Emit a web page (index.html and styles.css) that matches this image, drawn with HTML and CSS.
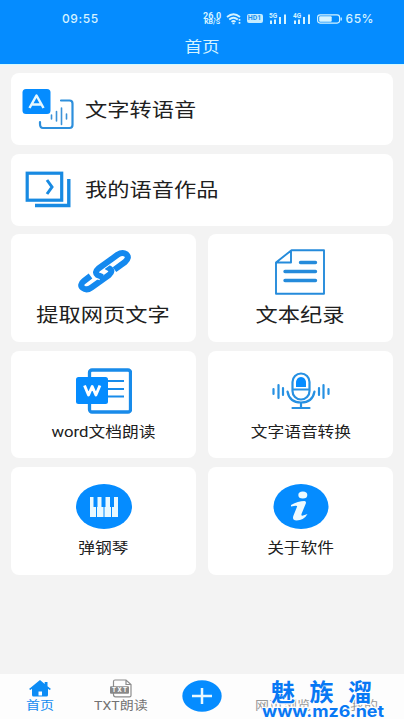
FILE: index.html
```
<!DOCTYPE html>
<html lang="zh-CN">
<head>
<meta charset="utf-8">
<meta name="viewport" content="width=device-width, initial-scale=1">
<title>首页</title>
<link rel="stylesheet" href="styles.css">
</head>
<body>
<header class="header">
  <div class="status">
    <span class="clock">09:55</span>
    <div class="indicators">
      <span class="speed"><b>26.0</b><b>KB/S</b></span>
      <svg class="wifi" width="17" height="12" viewBox="0 0 17 12" fill="none" stroke="currentColor" stroke-width="1.700"><path d="M1 4Q7.500-1.500 14 4M3.200 6.500Q7.500 3 11.800 6.500M5.500 8.800Q7.500 7.200 9.500 8.800"/><path d="M13.500 6v1.800M13.500 9v1.800M6.500 10.500h2"/></svg>
      <span class="hd">HD1</span>
      <svg class="signal" width="18" height="12" viewBox="0 0 18 12" fill="currentColor"><text x="0" y="5" font-size="6.500" font-weight="700">5G</text><path d="M1 7.500h2V11H1zM5 6.500h2V11H5zM10 4h2v7h-2zM15 1.500h2V11h-2z"/></svg>
      <svg class="signal" width="18" height="12" viewBox="0 0 18 12" fill="currentColor"><text x="0" y="5" font-size="6.500" font-weight="700">4G</text><path d="M1 7.500h2V11H1zM5 6.500h2V11H5zM10 4h2v7h-2zM15 1.500h2V11h-2z"/></svg>
      <svg class="battery" width="26" height="10" viewBox="0 0 26 10"><rect x=".6" y=".9" width="22" height="8.200" rx="2.500" fill="none" stroke="currentColor" stroke-width="1.100"/><rect x="2.200" y="2.200" width="12.500" height="5.600" rx="1" fill="currentColor"/><path d="M24.200 3.500v3" stroke="currentColor" stroke-width="1.300"/></svg>
      <span class="percent">65%</span>
    </div>
  </div>
  <h1 class="title"><span class="wide">首页</span></h1>
</header>

<main class="content">
  <a class="card row-card">
    <svg width="52" height="44" viewBox="0 0 52 44" fill="none"><path d="M39 11.500h8.500a3 3 0 0 1 3 3V36a3 3 0 0 1-3 3H21q-3 0-3-4v-2" stroke="#2d8fdc" stroke-width="2.200" stroke-linecap="round"/><path d="M29.500 26v4M34.500 22.500v9.500M39.500 19v16.500M44.500 25v5" stroke="#3b92d8" stroke-width="1.600" stroke-linecap="round"/><rect x=".5" y="0" width="28" height="25" rx="3.500" fill="#058cff"/><path d="M7.500 19 14.500 6.500 21.500 19M10.300 15.500h8.500" stroke="#e6f8ff" stroke-width="2.500" stroke-linejoin="round"/></svg>
    <span class="wide big">文字转语音</span>
  </a>
  <a class="card row-card">
    <svg width="52" height="44" viewBox="0 0 52 44" fill="none" stroke="#188ae2"><rect x="5.200" y="4.200" width="34.500" height="27" stroke-width="3.200"/><path d="M46.800 10v26.500H13" stroke-width="3.400"/><path d="m25 11 5 7-5 7" stroke-width="3"/></svg>
    <span class="wide big">我的语音作品</span>
  </a>

  <section class="grid">
    <a class="card tile">
      <svg width="56" height="46" viewBox="0 0 56 46" fill="none" stroke="#1489ef" stroke-width="6" stroke-linejoin="round"><path d="M14.500 27 8 32Q3 36 6.800 39 10.500 42 15.500 38.500L33 26Q37.500 22 33.500 19.500L30 17.500"/><path d="M25 27.500 21.500 26Q18 23.500 22.500 19.500L41.500 5.800Q46.500 2.500 50.300 5.200 54 8.500 49 13L39.500 20" stroke="#fff" stroke-width="8"/><path d="M26.500 28 21.500 26Q18 23.500 22.500 19.500L41.500 5.800Q46.500 2.500 50.300 5.200 54 8.500 49 13L38.500 20.700"/></svg>
      <span class="wide big">提取网页文字</span>
    </a>
    <a class="card tile">
      <svg width="56" height="46" viewBox="0 0 56 46" fill="none" stroke="#258bdb"><path d="M18.500 1.200H51V44.800H3V13.500zM18 1.500v12H3.500" stroke-width="1.900" stroke-linejoin="round"/><path d="M27.500 13.500h15M12 22.500h30.500M12 31.500h30.500" stroke-width="3.400" stroke-linecap="round"/></svg>
      <span class="wide big">文本纪录</span>
    </a>
    <a class="card tile lower">
      <svg width="56" height="46" viewBox="0 0 56 46" fill="none"><rect x="13.500" y="2" width="41" height="42" rx="2.500" stroke="#188bea" stroke-width="3.300"/><path d="M32 13h16M32 21h16M32 28.500h16" stroke="#188bea" stroke-width="2.200"/><rect x="0" y="9" width="32" height="27" rx="2.500" fill="#058cff"/><path d="m8.500 17.500 4 9.500 3.700-8.500 3.700 8.500 4-9.500" stroke="#fff" stroke-width="2.900" stroke-linejoin="round"/></svg>
      <span class="wide small">word文档朗读</span>
    </a>
    <a class="card tile lower">
      <svg width="58" height="46" viewBox="0 0 58 46" fill="none" stroke="#2690e2" stroke-width="2.200" stroke-linecap="round"><rect x="20.500" y="5.500" width="17" height="26" rx="8.500"/><path d="M24 19v-3.500Q24 9 29 9t5 6.500V19z" fill="#058cff" stroke="none"/><path d="M21 21.500h16M15.500 23.500Q17.500 34.500 29 34.500T42.500 23.500M29 35v5M20.500 40h17M1.500 21v5M6.500 17v13M11 20v7M47 20v7M51.500 17v13M56.500 21v5"/></svg>
      <span class="wide small">文字语音转换</span>
    </a>
    <a class="card tile round">
      <svg width="56" height="46" viewBox="0 0 56 46"><ellipse cx="28" cy="23.500" rx="28" ry="22.500" fill="#058cff"/><path d="M14 14h28v20H14z" fill="#e9f9ff"/><path d="M17.500 13h4v11h-4zM25.500 13h4v11h-4zM34 13h4v11h-4z" fill="#058cff"/><path d="M20.500 24v10.500M28 24v10.500M35.500 24v10.500" stroke="#058cff" stroke-width="1"/></svg>
      <span class="wide small">弹钢琴</span>
    </a>
    <a class="card tile round">
      <svg width="56" height="46" viewBox="0 0 56 46"><ellipse cx="28" cy="23.500" rx="27.500" ry="22.500" fill="#058cff"/><ellipse cx="29.800" cy="12" rx="4.500" ry="3.500" fill="#edfaff"/><path d="M18 22Q25 18 31.500 18 33.500 18.300 32.800 20.500L28.500 31Q28 33.200 30 32.600L34.500 31Q31 37.300 23.500 37.500 19 37.200 20.300 33L24 23.800Q24.500 22.500 22.500 22.700L18 23.500z" fill="#edfaff"/></svg>
      <span class="wide small">关于软件</span>
    </a>
  </section>
</main>

<nav class="nav">
  <a class="tab active">
    <svg width="24" height="19" viewBox="0 0 24 19"><path d="M12 1 1 10l1.400 1L4 9.800V16q0 1.500 1.500 1.500h13q1.500 0 1.500-1.500V9.800l1.600 1.200L23 10l-3.500-2.800V3h-2.800v2z" fill="#0c8cf5"/><path d="M10.500 12.500h3.500v4h-3.500z" fill="#fff"/></svg>
    <span class="wide label">首页</span>
  </a>
  <a class="tab">
    <svg width="24" height="19" viewBox="0 0 24 19" fill="none"><path d="M4.500 8V2.500Q4.500 1 6 1h11l5 4.500v11q0 1.300-1.500 1.300h-14q-2 0-2-2V14M17 1v4.500h5" stroke="#8c8c8c" stroke-width="1.200"/><rect x="1" y="7.200" width="19" height="7.500" rx="1" fill="#888"/><text x="10.500" y="13.300" text-anchor="middle" font-size="6.500" font-weight="700" textLength="15" fill="#fff">TXT</text></svg>
    <span class="wide label">TXT朗读</span>
  </a>
  <a class="tab add">
    <svg width="40" height="32" viewBox="0 0 40 32"><ellipse cx="20" cy="16" rx="19.700" ry="15.700" fill="#058cff"/><path d="M10 16h20M20 8v16" stroke="#e9f9ff" stroke-width="2.500"/></svg>
  </a>
  <a class="tab muted"><span class="wide label">网页浏览</span></a>
  <a class="tab muted"><span class="wide label">我的</span></a>
  <div class="watermark">
    <svg width="140" height="42" viewBox="0 0 140 42"><g class="mark-text"><text x="9" y="24" font-size="24" textLength="101">魅族溜</text><text x="0" y="39.500" font-size="16" textLength="122" lengthAdjust="spacingAndGlyphs">www.mz6.net</text></g></svg>
  </div>
</nav>
</body>
</html>
```
FILE: styles.css
```
* { box-sizing: border-box; }

body {
  margin: 0;
  width: 404px;
  height: 719px;
  overflow: hidden;
  display: flex;
  flex-direction: column;
  background: #f3f3f3;
  color: #202020;
  font-family: Roboto, "Noto Sans CJK SC", sans-serif;
}

svg { display: block; flex: none; }

.wide {
  display: inline-block;
  white-space: nowrap;
  transform: scaleX(1.17);
}

.header {
  height: 65px;
  flex: none;
  padding-top: 10px;
  background: #058cff;
  border-bottom: 1px solid #d5faff;
  color: #d5f3ff;
}

.status {
  height: 17px;
  display: flex;
  align-items: center;
  justify-content: space-between;
  padding: 0 30px 0 62px;
}

.clock {
  font: 500 12px/17px Inter, sans-serif;
  letter-spacing: 0.6px;
}

.indicators {
  display: flex;
  align-items: center;
}

.speed {
  width: 19px;
  margin-right: 4px;
  display: flex;
  flex-direction: column;
  align-items: center;
  font-size: 9px;
  line-height: 7px;
}

.speed b + b { font-size: 7px; line-height: 5px; }
.wifi { margin-right: 4px; }

.hd {
  width: 16px;
  height: 9px;
  margin-right: 6px;
  border-radius: 2px;
  background: #c5ecff;
  color: #1790f2;
  font-size: 7px;
  font-weight: 700;
  line-height: 9px;
  text-align: center;
}

.signal { margin-right: 6px; }
.battery { margin-right: 3px; }

.percent {
  font: 500 12px/17px Inter, sans-serif;
  letter-spacing: 0.5px;
}

.title {
  margin: 10px 0 0;
  font-size: 15px;
  font-weight: 400;
  line-height: 20px;
  text-align: center;
}

.content {
  flex: 1;
  display: flex;
  flex-direction: column;
  gap: 8.500px;
  padding: 8px 11px 0;
}

.card {
  display: flex;
  align-items: center;
  background: #fff;
  border-radius: 8px;
}

.row-card {
  height: 72px;
  padding: 3px 0 0 11px;
  gap: 11px;
}

.row-card .wide { transform-origin: left center; }

.grid {
  display: grid;
  grid-template-columns: 185px 185px;
  grid-auto-rows: 107.500px;
  gap: 9px 12px;
}

.tile {
  flex-direction: column;
  padding-top: 15px;
}

.lower { padding-top: 17px; }
.round { padding-top: 16px; }

.big { font-size: 19px; line-height: 28px; }
.tile .big { margin-top: 7px; }
.small { font-size: 14.300px; line-height: 22px; margin-top: 8px; }
.lower .small { margin-top: 7px; }

.nav {
  position: relative;
  height: 45px;
  flex: none;
  display: grid;
  grid-template-columns: repeat(5, 1fr);
  background: #fdfdfd;
}

.tab {
  display: flex;
  flex-direction: column;
  align-items: center;
  padding-top: 5px;
  color: #737373;
}

.active { color: #168cf0; }
.label { font-size: 12px; line-height: 17px; }
.add { padding-top: 6px; }
.muted { padding-top: 24px; color: #999; }

.watermark {
  position: absolute;
  left: 262px;
  top: 3px;
}

.mark-text {
  fill: #0878f4;
  stroke: #fdfdfd;
  stroke-width: 2.500px;
  paint-order: stroke;
  font-family: Inter, "Noto Sans CJK SC", sans-serif;
  font-weight: 700;
}
```
